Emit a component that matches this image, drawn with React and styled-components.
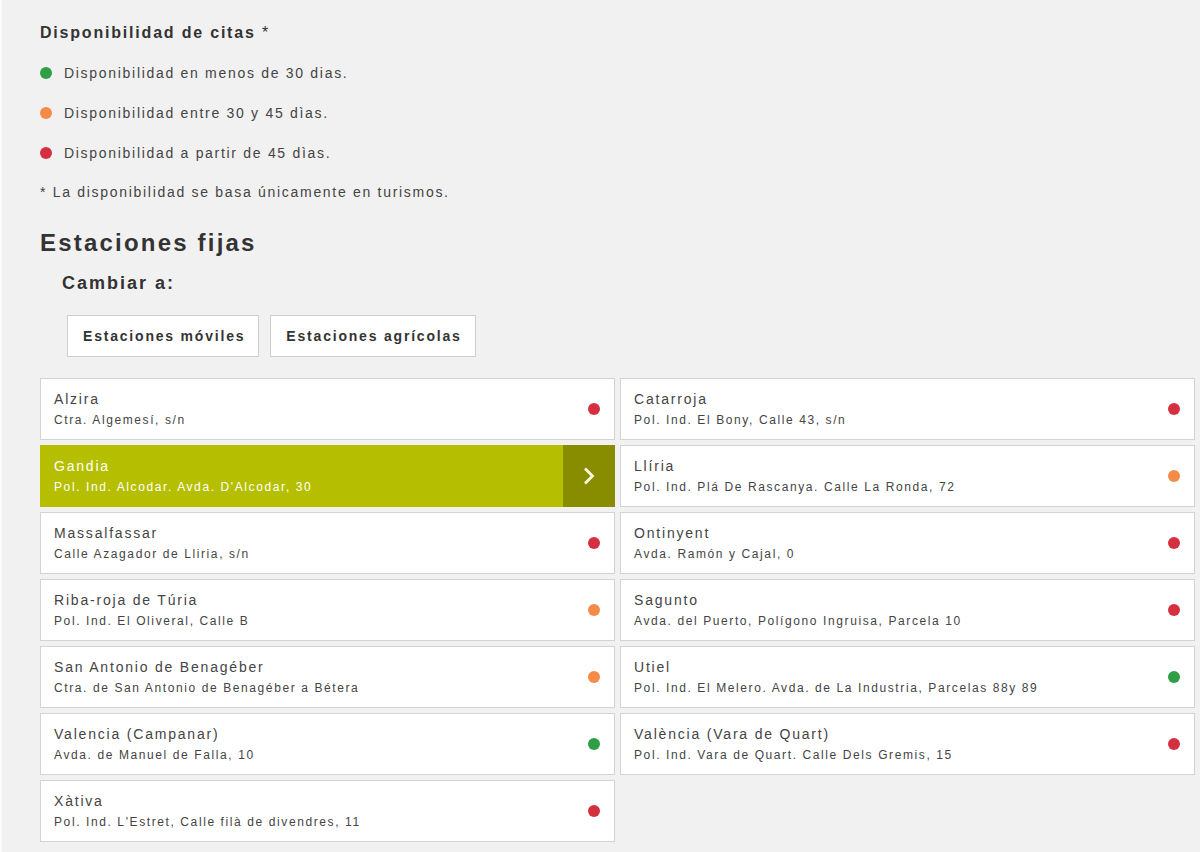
import React from 'react';
import styled, { createGlobalStyle, css } from 'styled-components';

const GlobalStyle = createGlobalStyle`
  body {
    margin: 0;
    background: #f1f1f1;
    font-family: 'Liberation Sans', Arial, sans-serif;
    color: #444;
  }
`;

const COLORS = {
  green: '#2e9f45',
  orange: '#f48c47',
  red: '#d5303f',
};

const legend = [
  { color: 'green', text: 'Disponibilidad en menos de 30 dias.' },
  { color: 'orange', text: 'Disponibilidad entre 30 y 45 dìas.' },
  { color: 'red', text: 'Disponibilidad a partir de 45 dìas.' },
];

const stations = [
  { name: 'Alzira', address: 'Ctra. Algemesí, s/n', status: 'red' },
  { name: 'Catarroja', address: 'Pol. Ind. El Bony, Calle 43, s/n', status: 'red' },
  { name: 'Gandia', address: "Pol. Ind. Alcodar. Avda. D'Alcodar, 30", status: 'red', active: true },
  { name: 'Llíria', address: 'Pol. Ind. Plá De Rascanya. Calle La Ronda, 72', status: 'orange' },
  { name: 'Massalfassar', address: 'Calle Azagador de Lliria, s/n', status: 'red' },
  { name: 'Ontinyent', address: 'Avda. Ramón y Cajal, 0', status: 'red' },
  { name: 'Riba-roja de Túria', address: 'Pol. Ind. El Oliveral, Calle B', status: 'orange' },
  { name: 'Sagunto', address: 'Avda. del Puerto, Polígono Ingruisa, Parcela 10', status: 'red' },
  { name: 'San Antonio de Benagéber', address: 'Ctra. de San Antonio de Benagéber a Bétera', status: 'orange' },
  { name: 'Utiel', address: 'Pol. Ind. El Melero. Avda. de La Industria, Parcelas 88y 89', status: 'green' },
  { name: 'Valencia (Campanar)', address: 'Avda. de Manuel de Falla, 10', status: 'green' },
  { name: 'València (Vara de Quart)', address: 'Pol. Ind. Vara de Quart. Calle Dels Gremis, 15', status: 'red' },
  { name: 'Xàtiva', address: "Pol. Ind. L'Estret, Calle filà de divendres, 11", status: 'red' },
];

const App = () => {
  return (
    <>
      <GlobalStyle />
      <Page>
        <LegendTitle>
          Disponibilidad de citas <Asterisk>*</Asterisk>
        </LegendTitle>
        <LegendList>
          {legend.map(item => (
            <LegendItem key={item.text}>
              <Dot color={COLORS[item.color]} />
              {item.text}
            </LegendItem>
          ))}
        </LegendList>
        <Footnote>* La disponibilidad se basa únicamente en turismos.</Footnote>

        <SectionTitle>Estaciones fijas</SectionTitle>
        <SwitchLabel>Cambiar a:</SwitchLabel>
        <SwitchButtons>
          <SwitchButton>Estaciones móviles</SwitchButton>
          <SwitchButton>Estaciones agrícolas</SwitchButton>
        </SwitchButtons>

        <StationGrid>
          {stations.map(s => (
            <StationCard key={s.name} active={s.active}>
              <StationText>
                <StationName>{s.name}</StationName>
                <StationAddress>{s.address}</StationAddress>
              </StationText>
              {s.active ? (
                <Arrow>
                  <svg width='16' height='22' viewBox='0 0 16 22'>
                    <path d='M4 3.5l7.5 7.5-7.5 7.5' fill='none' stroke='#f6f6dc' strokeWidth='2.8' />
                  </svg>
                </Arrow>
              ) : (
                <Dot color={COLORS[s.status]} />
              )}
            </StationCard>
          ))}
        </StationGrid>
      </Page>
    </>
  );
};

const Page = styled.div`
  border-left: 2px solid #fbfbfb;
  padding: 22px 5px 10px 38px;
  min-height: 852px;
  box-sizing: border-box;
`;

const LegendTitle = styled.h3`
  margin: 0;
  font-size: 16px;
  line-height: 22px;
  font-weight: 700;
  letter-spacing: 1.8px;
  color: #333;
`;

const Asterisk = styled.span`
  font-weight: 400;
`;

const LegendList = styled.ul`
  list-style: none;
  margin: 19px 0 0;
  padding: 0;
  display: flex;
  flex-direction: column;
  gap: 20px;
`;

const LegendItem = styled.li`
  display: flex;
  align-items: center;
  gap: 12px;
  font-size: 14px;
  line-height: 20px;
  letter-spacing: 1.7px;
  color: #444;
`;

const Dot = styled.span`
  width: 12px;
  height: 12px;
  border-radius: 50%;
  flex: none;
  background: ${props => props.color};
`;

const Footnote = styled.p`
  margin: 19px 0 0;
  font-size: 14px;
  line-height: 20px;
  letter-spacing: 1.7px;
  color: #444;
`;

const SectionTitle = styled.h2`
  margin: 25px 0 0;
  font-size: 24px;
  line-height: 32px;
  font-weight: 700;
  letter-spacing: 2.2px;
  color: #333;
`;

const SwitchLabel = styled.h4`
  margin: 12px 0 0 22px;
  font-size: 18px;
  line-height: 24px;
  font-weight: 700;
  letter-spacing: 2px;
  color: #333;
`;

const SwitchButtons = styled.div`
  display: flex;
  gap: 11px;
  margin: 20px 0 0 27px;
`;

const SwitchButton = styled.button`
  height: 42px;
  padding: 0 13px 0 15px;
  background: #fff;
  border: 1px solid #cfcfcf;
  font-family: inherit;
  font-size: 14px;
  font-weight: 700;
  letter-spacing: 1.8px;
  color: #333;
  cursor: pointer;
`;

const StationGrid = styled.div`
  display: grid;
  grid-template-columns: 575px 575px;
  gap: 5px;
  margin-top: 21px;
`;

const StationCard = styled.div`
  height: 62px;
  box-sizing: border-box;
  display: flex;
  align-items: center;
  justify-content: space-between;
  padding: 0 14px 0 13px;
  background: #fff;
  border: 1px solid #d3d3d3;
  color: #444;
  ${props =>
    props.active &&
    css`
      background: #b5bf00;
      border-color: #b5bf00;
      color: #fff;
      padding-right: 0;
    `}
`;

const StationText = styled.div`
  display: flex;
  flex-direction: column;
  gap: 2px;
`;

const StationName = styled.span`
  font-size: 14px;
  line-height: 20px;
  letter-spacing: 1.8px;
`;

const StationAddress = styled.span`
  font-size: 12px;
  line-height: 18px;
  letter-spacing: 1.6px;
`;

const Arrow = styled.div`
  align-self: stretch;
  width: 52px;
  margin: -1px -1px -1px 0;
  display: flex;
  align-items: center;
  justify-content: center;
  background: #888d00;
`;

export default App;
